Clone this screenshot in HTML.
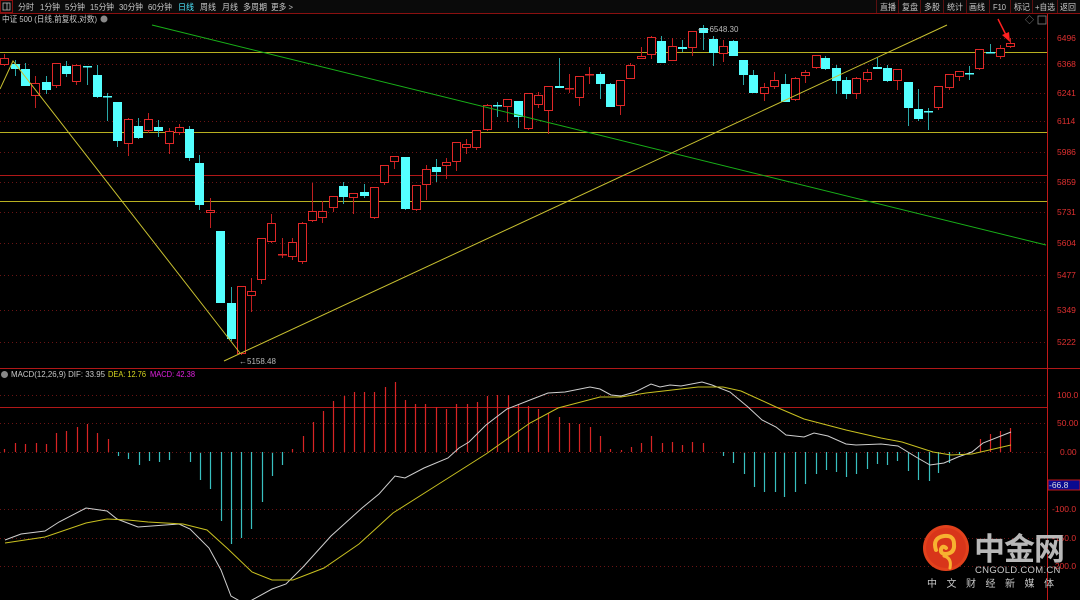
<!DOCTYPE html>
<html><head><meta charset="utf-8">
<style>
html,body{margin:0;padding:0;background:#000;width:1080px;height:600px;overflow:hidden}
svg{display:block}
text{font-family:"Liberation Sans","Noto Sans CJK SC",sans-serif}
</style></head><body>
<svg id="s" width="1080" height="600" viewBox="0 0 1080 600" xmlns="http://www.w3.org/2000/svg">
<rect width="1080" height="600" fill="#000"/>
<!-- toolbar -->
<rect x="0" y="0" width="1080" height="13" fill="#0a0a0a"/>
<line x1="0" y1="13.5" x2="1080" y2="13.5" stroke="#8a1010"/>
<rect x="0.5" y="0.5" width="12" height="12" fill="none" stroke="#8a1010"/>
<rect x="3" y="3" width="7" height="7" fill="none" stroke="#bbb" stroke-width="0.8"/>
<line x1="7" y1="3" x2="7" y2="10" stroke="#bbb" stroke-width="0.8"/>
<g font-size="8.5" fill="#c8c8c8">
<text x="18" y="10" textLength="16" lengthAdjust="spacingAndGlyphs">分时</text><text x="40" y="10" textLength="20" lengthAdjust="spacingAndGlyphs">1分钟</text><text x="65" y="10" textLength="20" lengthAdjust="spacingAndGlyphs">5分钟</text><text x="90" y="10" textLength="24" lengthAdjust="spacingAndGlyphs">15分钟</text><text x="119" y="10" textLength="24" lengthAdjust="spacingAndGlyphs">30分钟</text><text x="148" y="10" textLength="24" lengthAdjust="spacingAndGlyphs">60分钟</text>
<text x="178" y="10" fill="#4fe8ff" textLength="16" lengthAdjust="spacingAndGlyphs">日线</text><text x="200" y="10" textLength="16" lengthAdjust="spacingAndGlyphs">周线</text><text x="222" y="10" textLength="16" lengthAdjust="spacingAndGlyphs">月线</text><text x="243" y="10" textLength="24" lengthAdjust="spacingAndGlyphs">多周期</text><text x="271" y="10" textLength="22" lengthAdjust="spacingAndGlyphs">更多 &gt;</text>
<text x="880" y="10" textLength="16" lengthAdjust="spacingAndGlyphs">直播</text><text x="902" y="10" textLength="16" lengthAdjust="spacingAndGlyphs">复盘</text><text x="924" y="10" textLength="16" lengthAdjust="spacingAndGlyphs">多股</text><text x="947" y="10" textLength="16" lengthAdjust="spacingAndGlyphs">统计</text><text x="969" y="10" textLength="16" lengthAdjust="spacingAndGlyphs">画线</text><text x="993" y="10" textLength="13" lengthAdjust="spacingAndGlyphs">F10</text><text x="1014" y="10" textLength="16" lengthAdjust="spacingAndGlyphs">标记</text><text x="1035" y="10" textLength="20" lengthAdjust="spacingAndGlyphs">+自选</text><text x="1060" y="10" textLength="16" lengthAdjust="spacingAndGlyphs">返回</text>
</g>
<g stroke="#5a1010">
<line x1="876.5" y1="0" x2="876.5" y2="13"/><line x1="898.5" y1="0" x2="898.5" y2="13"/><line x1="920.5" y1="0" x2="920.5" y2="13"/><line x1="943.5" y1="0" x2="943.5" y2="13"/><line x1="966.5" y1="0" x2="966.5" y2="13"/><line x1="989.5" y1="0" x2="989.5" y2="13"/><line x1="1010.5" y1="0" x2="1010.5" y2="13"/><line x1="1032.5" y1="0" x2="1032.5" y2="13"/><line x1="1057.5" y1="0" x2="1057.5" y2="13"/>
</g>
<text x="2" y="22" font-size="8.5" fill="#c8c8c8" textLength="95" lengthAdjust="spacingAndGlyphs">中证 500 (日线,前复权,对数)</text>
<circle cx="104" cy="19" r="3.5" fill="#888"/>
<text x="1025" y="23" font-size="9" fill="#888">◇</text>
<rect x="1038" y="16" width="8" height="8" fill="none" stroke="#888" stroke-width="0.8"/>
<!-- grid -->
<g id="grid" stroke="#6a1414" stroke-dasharray="1,3" stroke-width="1"></g>
<!-- solid lines -->
<line x1="0" y1="175.5" x2="1047" y2="175.5" stroke="#b01818"/>
<line x1="0" y1="368.5" x2="1080" y2="368.5" stroke="#b01818"/>
<line x1="0" y1="407.5" x2="1047" y2="407.5" stroke="#b01818"/>
<line x1="1047.5" y1="14" x2="1047.5" y2="600" stroke="#c01818"/>
<g stroke="#b8b020" stroke-width="1">
<line x1="0" y1="52.5" x2="1047" y2="52.5"/>
<line x1="0" y1="132.5" x2="1047" y2="132.5"/>
<line x1="0" y1="201.5" x2="1047" y2="201.5"/>
</g>
<g id="cand"></g>
<!-- trendlines -->
<line x1="152" y1="25" x2="1046" y2="245" stroke="#18b018" stroke-width="1"/>
<polyline points="0,89 13,61 240,353" fill="none" stroke="#c8c030" stroke-width="1"/>
<line x1="224" y1="361" x2="947" y2="25" stroke="#c8c030" stroke-width="1"/>
<text x="239" y="364" font-size="8" fill="#bbb">←5158.48</text>
<text x="698" y="32" font-size="8" fill="#bbb">⟵6548.30</text>
<!-- red arrow -->
<line x1="998" y1="19" x2="1007" y2="37" stroke="#ff2020" stroke-width="1.5"/>
<polygon points="1010,42 1002,35 1009,32" fill="#ff2020"/>
<!-- price labels -->
<g font-size="8.5" fill="#e03030">
<text x="1057" y="41">6496</text><text x="1057" y="67">6368</text><text x="1057" y="96">6241</text><text x="1057" y="124">6114</text><text x="1057" y="155">5986</text><text x="1057" y="185">5859</text><text x="1057" y="215">5731</text><text x="1057" y="246">5604</text><text x="1057" y="278">5477</text><text x="1057" y="313">5349</text><text x="1057" y="345">5222</text>
</g>
<!-- MACD -->
<circle cx="4.5" cy="374.5" r="3.5" fill="#888"/>
<text x="11" y="377" font-size="8.5" fill="#c8c8c8" textLength="94" lengthAdjust="spacingAndGlyphs">MACD(12,26,9)  DIF: 33.95</text>
<text x="108" y="377" font-size="8.5" fill="#d8d820" textLength="38" lengthAdjust="spacingAndGlyphs">DEA: 12.76</text>
<text x="150" y="377" font-size="8.5" fill="#e020e0" textLength="45" lengthAdjust="spacingAndGlyphs">MACD: 42.38</text>
<g id="bars"></g>
<polyline fill="none" stroke="#cfcfcf" stroke-width="1" points="5,540 21,534 45,531 59,522 86,508 107,511 117,519 138,527 179,524 190,529 209,548 221,570 231,596 245,604 252,600 272,589 286,584 303,567 331,536 362,508 379,494 395,476 405,478 424,468 448,458 459,448 469,442 486,425 507,409 530,400 548,393 565,392 590,387 600,389 611,395 621,396 635,392 651,384 660,387 670,385 681,386 702,382 712,385 730,392 748,407 762,420 776,427 786,435 804,437 814,433 828,436 846,444 856,445 881,444 898,446 916,457 930,465 944,463 958,457 972,452 983,443 1011,432"/>
<polyline fill="none" stroke="#c8c020" stroke-width="1" points="5,543 45,537 86,523 107,519 128,520 148,522 183,524 207,530 228,549 252,572 272,580 293,580 324,568 359,544 393,513 434,487 486,454 530,423 558,408 600,397 621,397 646,393 698,387 723,387 741,391 776,407 804,419 846,430 881,438 902,442 933,452 951,455 972,454 1011,445"/>
<g font-size="8.5" fill="#e03030">
<text x="1057" y="398">100.0</text><text x="1057" y="426">50.00</text><text x="1060" y="455">0.00</text><text x="1052" y="512">-100.0</text><text x="1052" y="541">-150.0</text><text x="1052" y="569">-200.0</text>
</g>
<rect x="1048" y="480" width="32" height="10" fill="#0a0a90" stroke="#c01818"/>
<text x="1049" y="488" font-size="8.5" fill="#ddd">-66.8</text>
<!-- logo -->
<circle cx="946" cy="548" r="23" fill="#e2411c"/>
<circle cx="946" cy="548" r="20" fill="#d8351a"/>
<path d="M936,550 q-4,-12 8,-14 q10,-1 10,8 q1,9 -8,10 q-6,0 -5,-5 q2,-4 5,-1" fill="none" stroke="#f7b230" stroke-width="4" stroke-linecap="round"/>
<path d="M944,556 q8,2 6,12" fill="none" stroke="#f7b230" stroke-width="3" stroke-linecap="round"/>
<text x="974" y="560" font-size="31" font-weight="bold" fill="#b8b8b8" letter-spacing="-1">中金网</text>
<text x="975" y="573" font-size="9.5" fill="#c8c8c8" letter-spacing="0.3">CNGOLD.COM.CN</text>
<text x="927" y="587" font-size="10" fill="#c8c8c8" letter-spacing="9.5">中文财经新媒体</text>
</svg>
<script>
var NS="http://www.w3.org/2000/svg";
function el(p,t,a){var e=document.createElementNS(NS,t);for(var k in a)e.setAttribute(k,a[k]);p.appendChild(e);return e;}
var g=document.getElementById("grid");
[38,64,93,121,152,182,212,243,275,310,342,395,423,452,509,538,566].forEach(function(y){el(g,"line",{x1:0,y1:y+.5,x2:1047,y2:y+.5});});
var C=[[4,58,65,54,66,1],[15,64,69,60,76,0],[25,69,86,63,86,0],[35,83,96,76,108,1],[46,82,90,76,94,0],[56,63,86,63,88,1],[66,66,74,61,77,0],[76,65,82,64,85,1],[87,66,66,66,85,0],[97,75,97,65,98,0],[107,96,96,93,121,0],[117,102,141,102,147,0],[128,119,144,118,156,1],[138,126,138,118,139,0],[148,119,131,113,133,1],[158,127,131,120,137,0],[169,131,144,128,154,1],[179,127,133,124,135,1],[189,129,158,126,161,0],[199,163,205,155,210,0],[210,210,213,198,228,1],[220,231,303,231,303,0],[231,303,339,287,341,0],[241,286,354,286,355,1],[251,291,296,278,312,1],[261,238,280,238,284,1],[271,223,242,214,243,1],[282,254,254,238,258,1],[292,242,257,238,260,1],[302,223,262,222,264,1],[312,211,221,183,222,1],[322,211,218,201,223,1],[333,196,208,196,212,1],[343,186,197,182,204,0],[353,193,198,193,214,1],[364,192,196,184,198,0],[374,187,218,187,219,1],[384,165,183,165,185,1],[394,156,162,156,169,1],[405,157,209,157,210,0],[416,185,210,185,211,1],[426,169,185,165,200,1],[436,167,172,159,182,0],[446,162,166,158,179,1],[456,142,162,142,171,1],[466,144,148,139,154,1],[476,130,148,130,150,1],[487,105,130,104,131,1],[497,105,105,102,117,0],[507,99,107,99,122,1],[518,101,117,101,128,0],[528,93,129,93,130,1],[538,95,105,92,108,1],[548,86,111,86,134,1],[559,86,88,58,88,0],[569,88,88,74,93,1],[579,76,98,76,106,1],[589,74,74,67,84,1],[600,74,84,72,99,0],[610,84,107,83,107,0],[620,80,106,80,115,1],[630,65,79,63,79,1],[641,56,59,47,59,1],[651,37,55,36,59,1],[661,41,63,36,63,0],[672,46,61,38,61,1],[682,47,49,40,52,0],[692,31,48,31,56,1],[703,28,33,25,50,0],[713,39,53,36,66,0],[723,46,54,40,62,1],[733,41,56,40,56,0],[743,60,75,60,85,0],[753,75,93,70,93,0],[764,87,94,83,101,1],[774,80,87,72,89,1],[785,84,102,74,102,0],[795,78,100,77,101,1],[805,72,76,70,83,1],[816,55,68,55,69,1],[825,58,69,56,70,0],[836,68,81,65,94,0],[846,80,94,77,99,0],[856,78,94,77,99,1],[867,72,80,69,82,1],[877,67,69,58,69,0],[887,68,81,65,82,0],[897,69,81,69,90,1],[908,82,108,82,126,0],[918,109,119,89,121,0],[928,111,111,108,130,0],[938,86,108,86,110,1],[949,74,88,74,90,1],[959,71,77,71,81,1],[969,73,74,66,80,0],[979,49,69,49,70,1],[990,52,53,44,53,0],[1000,48,57,45,59,1],[1010,43,47,38,48,1]];
var cg=document.getElementById("cand");
C.forEach(function(c){var x=c[0],col=c[5]?"#e02828":"#54ffff";
 el(cg,"line",{x1:x+.5,y1:c[3],x2:x+.5,y2:c[4],stroke:c[5]?"#c02020":"#2aa8a8"});
 var h=c[2]-c[1];
 if(h<2){el(cg,"rect",{x:x-4,y:c[1],width:9,height:Math.max(h,1.5),fill:col});}
 else if(c[5]){el(cg,"rect",{x:x-3.5,y:c[1]+.5,width:8,height:h-1,fill:"#000",stroke:col});}
 else{el(cg,"rect",{x:x-4,y:c[1],width:9,height:h,fill:col});}
});
var R=[[4,449],[15,443],[25,444],[36,443],[46,444],[56,433],[66,431],[77,427],[87,424],[97,433],[108,439],[292,449],[303,436],[313,422],[323,411],[333,401],[344,396],[354,392],[364,392],[374,392],[385,387],[395,382],[405,400],[415,404],[425,404],[436,407],[446,409],[456,404],[467,404],[477,402],[487,396],[497,395],[508,395],[518,404],[528,406],[538,409],[548,413],[559,417],[569,423],[579,424],[590,427],[600,436],[610,449],[621,450],[631,447],[641,443],[651,436],[662,443],[672,442],[682,445],[692,442],[703,443],[980,439],[990,434],[1000,431],[1010,428]];
var B=[[118,456],[128,459],[139,465],[149,461],[159,462],[169,460],[190,462],[200,480],[210,489],[221,521],[231,544],[241,538],[251,529],[262,502],[272,476],[282,465],[723,456],[733,463],[744,474],[754,487],[764,492],[775,492],[784,497],[795,492],[805,484],[816,474],[826,470],[836,472],[846,477],[856,474],[867,469],[877,464],[887,465],[897,461],[908,471],[918,480],[929,481],[938,473],[949,463],[959,455],[969,453]];
var bg=document.getElementById("bars");
R.forEach(function(b){el(bg,"line",{x1:b[0]+.5,y1:b[1],x2:b[0]+.5,y2:452,stroke:"#d82424","stroke-width":1.2});});
B.forEach(function(b){el(bg,"line",{x1:b[0]+.5,y1:452,x2:b[0]+.5,y2:b[1],stroke:"#38c0c0","stroke-width":1.2});});
el(bg,"line",{x1:0,y1:452.5,x2:1047,y2:452.5,stroke:"#6a1414","stroke-dasharray":"1,3"});
</script>
</body></html>
